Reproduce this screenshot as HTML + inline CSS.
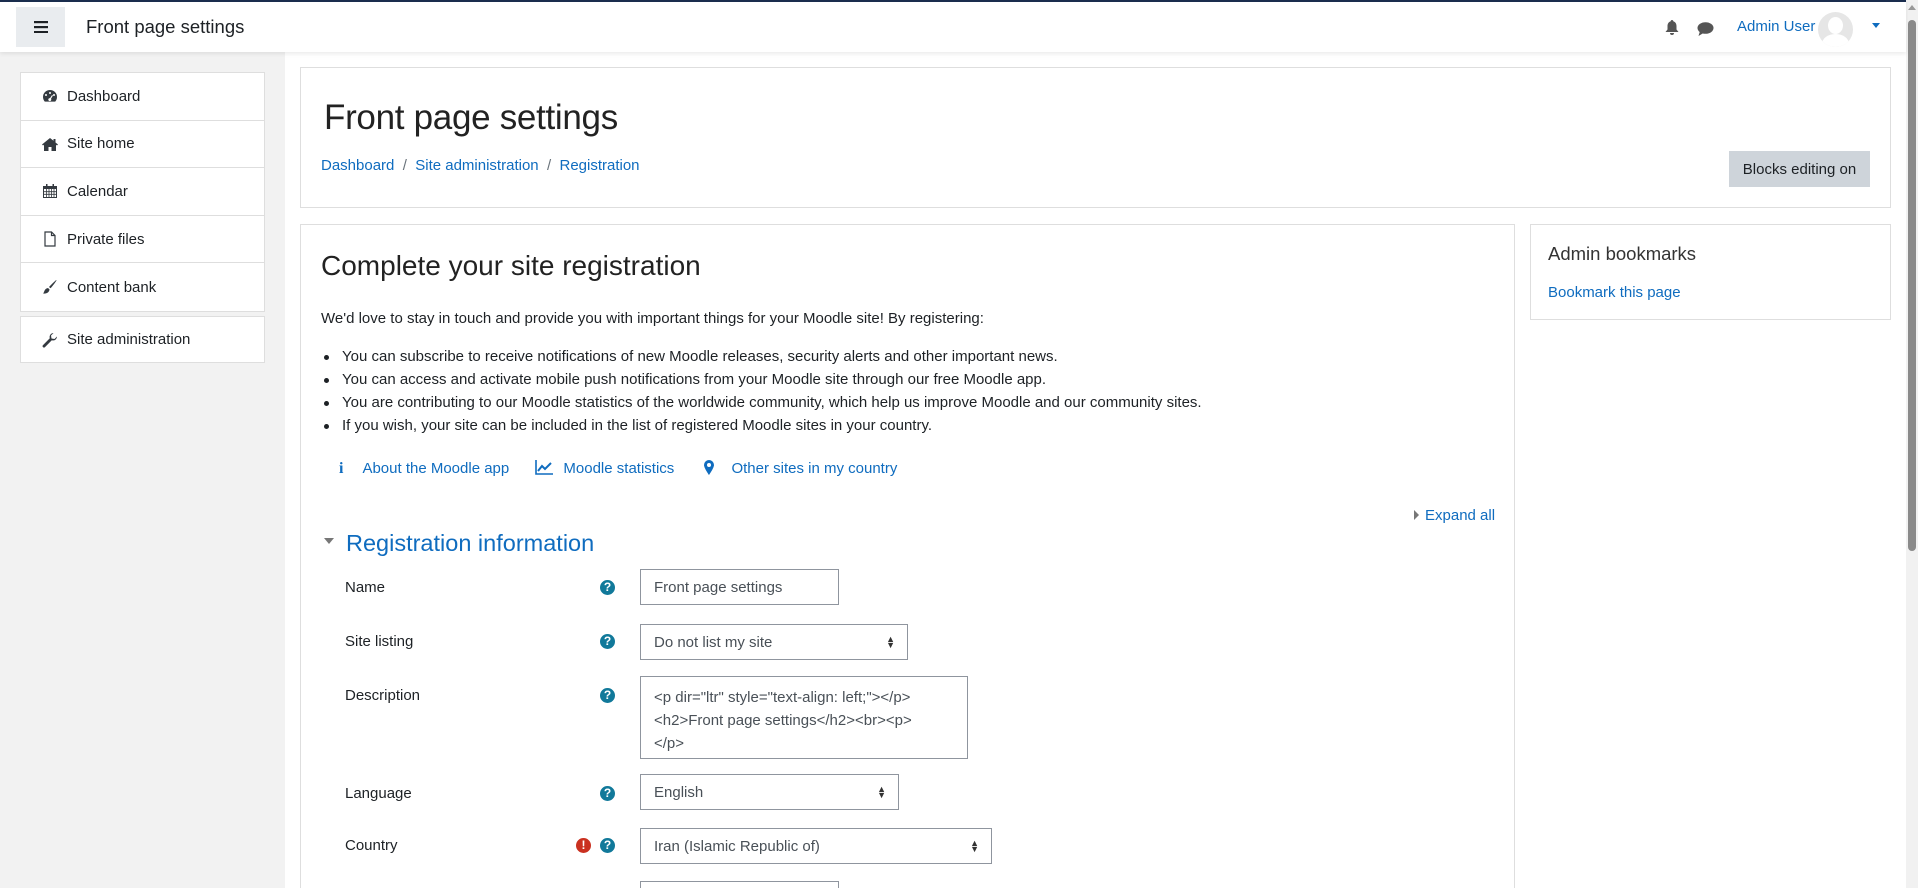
<!DOCTYPE html>
<html><head><meta charset="utf-8">
<style>
*{box-sizing:border-box;margin:0;padding:0}
html,body{width:1918px;height:888px;overflow:hidden;background:#fff;font-family:"Liberation Sans",Arial,sans-serif;font-size:15px;color:#1d2125}
#wrap{position:relative;width:1918px;height:888px;overflow:hidden}
a{color:#0f6cbf;text-decoration:none}
.abs{position:absolute}
#top{position:absolute;left:0;top:0;width:1906px;height:52px;background:#fff;border-top:2px solid #1a2d4d;box-shadow:0 2px 4px rgba(0,0,0,.08);z-index:2}
#side{position:absolute;left:0;top:52px;width:285px;height:836px;background:#f2f2f2}
.blk{position:absolute;left:20px;width:245px;background:#fff;border:1px solid #dedede}
.it{height:47.6px;border-bottom:1px solid #dedede;display:flex;align-items:center;padding-left:21px;font-size:15px;color:#1d2125}
.it:last-child{border-bottom:none}
.it svg{width:16px;height:16px;margin-right:9px;fill:#343a40}
.card{position:absolute;background:#fff;border:1px solid #dedede}
h1{font-weight:300;font-size:35px;color:#222;position:absolute;left:23px;top:30px;letter-spacing:-0.3px}
.lbl{position:absolute;left:345px;font-size:15px}
.hlp{position:absolute;left:600px;width:15px;height:15px;border-radius:50%;background:#11799a;color:#fff;font-size:12px;font-weight:bold;text-align:center;line-height:15px}
.inp{position:absolute;left:640px;border:1px solid #8f959e;background:#fff;font-size:15px;padding-left:13px;display:flex;align-items:center;color:#495057}
.arr{position:absolute;right:12px;top:50%;transform:translateY(-50%);font-size:9px;line-height:6px;color:#333}
ul{list-style:none}
li{position:relative;padding-left:21px;height:23px;line-height:23px}
li:before{content:"";position:absolute;left:3px;top:10px;width:5px;height:5px;border-radius:50%;background:#1d2125}
</style></head><body><div id="wrap">
<div id="top">
 <div class="abs" style="left:16px;top:5px;width:49px;height:40px;background:#e9ecef;display:flex;align-items:center;justify-content:center">
  <svg width="14" height="12" viewBox="0 0 14 12"><rect y="0" width="14" height="2.2" fill="#1d2125"/><rect y="5" width="14" height="2.2" fill="#1d2125"/><rect y="10" width="14" height="2" fill="#1d2125"/></svg>
 </div>
 <div class="abs" style="left:86px;top:14px;font-size:18.5px;color:#1d2125">Front page settings</div>
 <svg class="abs" style="left:1665px;top:18px" width="14" height="16" viewBox="0 0 14 16"><path d="M7 0c1 0 1.3.8 1.3 1.3C10.5 2 11.5 4 11.5 6v3.5L13.5 12H.5l2-2.5V6c0-2 1-4 3.2-4.7C5.7.8 6 0 7 0zM5 13h4a2 2 0 01-4 0z" fill="#555"/></svg>
 <svg class="abs" style="left:1697px;top:20px" width="17" height="15" viewBox="0 0 17 15"><ellipse cx="8.5" cy="6" rx="8" ry="5.8" fill="#555"/><path d="M3 9l-1.5 5 5-3z" fill="#555"/></svg>
 <div class="abs" style="left:1737px;top:16px;font-size:15px;color:#0f6cbf">Admin User</div>
 <div class="abs" style="left:1818px;top:10px;width:35px;height:35px;border-radius:50%;background:#e6e6e6;overflow:hidden">
  <div class="abs" style="left:10px;top:5px;width:15px;height:17px;border-radius:50%;background:#fff"></div>
  <div class="abs" style="left:4px;top:22px;width:27px;height:20px;border-radius:50%;background:#fff"></div>
 </div>
 <div class="abs" style="left:1872px;top:21px;width:0;height:0;border-left:4px solid transparent;border-right:4px solid transparent;border-top:5px solid #0f6cbf"></div>
</div>
<div id="side">
 <div class="blk" style="top:20px">
  <div class="it"><svg viewBox="0 0 16 16"><path d="M8 2a7 7 0 00-7 7c0 1.8.7 3.4 1.8 4.6h10.4A7 7 0 0015 9a7 7 0 00-7-7zm0 2a1 1 0 110 2 1 1 0 010-2zM4 6a1 1 0 110 2 1 1 0 010-2zm8 0a1 1 0 110 2 1 1 0 010-2zm-1 1.5l-2 3.2a1.5 1.5 0 11-1-.6l2-3z"/></svg>Dashboard</div>
  <div class="it"><svg viewBox="0 0 16 16"><path d="M8 2L0 8.5l1 1 1-.8V15h4.5v-4h3v4H14V8.7l1 .8 1-1-2.5-2V3h-2v1.8z"/></svg>Site home</div>
  <div class="it"><svg viewBox="0 0 16 16"><path d="M1 3h14v12H1zM2 6v8h12V6zM4 1h1.5v3H4zm6.5 0H12v3h-1.5z"/><path d="M4.5 6v8M7 6v8M9.5 6v8M12 6v8M2 8.7h12M2 11.3h12" stroke="#343a40" stroke-width=".8"/></svg>Calendar</div>
  <div class="it"><svg viewBox="0 0 16 16"><path d="M3 1h6.5L13 4.5V15H3z" fill="none" stroke="#343a40" stroke-width="1.2"/><path d="M9.5 1v3.5H13" fill="none" stroke="#343a40" stroke-width="1.2"/></svg>Private files</div>
  <div class="it"><svg viewBox="0 0 16 16"><path d="M14.5 1c.5.3-4.5 7-6 8.3l-1.5-1.3C8.5 6.5 14 .7 14.5 1zM6 9l1.5 1.4C7.3 13 5 15 1 14.5c1.5-1 1-4.8 5-5.5z"/></svg>Content bank</div>
 </div>
 <div class="blk" style="top:264px">
  <div class="it" style="height:45px"><svg viewBox="0 0 16 16"><path d="M15 4.5a4 4 0 01-5.2 3.8L3 15.1a1.4 1.4 0 01-2-2l6.8-6.8A4 4 0 0111.5 1L9 3.5l.5 3 3 .5L15 4.5z"/></svg>Site administration</div>
 </div>
</div>
<div class="card" style="left:300px;top:67px;width:1591px;height:141px">
 <h1>Front page settings</h1>
 <div class="abs" style="left:20px;top:89px;font-size:15px;color:#6a737b"><a href="#">Dashboard</a>&nbsp; / &nbsp;<a href="#">Site administration</a>&nbsp; / &nbsp;<a href="#">Registration</a></div>
 <div class="abs" style="left:1428px;top:83px;width:141px;height:36px;background:#ced4da;display:flex;align-items:center;justify-content:center;font-size:15px;color:#1d2125">Blocks editing on</div>
</div>
<div class="card" style="left:1530px;top:224px;width:361px;height:96px">
 <div class="abs" style="left:17px;top:18px;font-size:18.5px;font-weight:300;color:#333">Admin bookmarks</div>
 <a class="abs" style="left:17px;top:59px;font-size:15px" href="#">Bookmark this page</a>
</div>
<div class="card" style="left:300px;top:224px;width:1215px;height:700px">
 <div class="abs" style="left:20px;top:25px;font-size:28px;font-weight:300;color:#222">Complete your site registration</div>
 <div class="abs" style="left:20px;top:85px;font-size:15px">We'd love to stay in touch and provide you with important things for your Moodle site! By registering:</div>
 <ul class="abs" style="left:20px;top:120px;font-size:15px">
  <li>You can subscribe to receive notifications of new Moodle releases, security alerts and other important news.</li>
  <li>You can access and activate mobile push notifications from your Moodle site through our free Moodle app.</li>
  <li>You are contributing to our Moodle statistics of the worldwide community, which help us improve Moodle and our community sites.</li>
  <li>If you wish, your site can be included in the list of registered Moodle sites in your country.</li>
 </ul>
 <div class="abs" style="left:38px;top:235px;font-size:15px;color:#0f6cbf;white-space:nowrap">
  <span style="font-weight:bold;font-family:'Liberation Serif',serif;font-size:16px">i</span><span style="margin-left:19px">About the Moodle app</span>
  <svg style="margin-left:22px;vertical-align:-2px" width="18" height="15" viewBox="0 0 18 15"><path d="M1 0v14h17" fill="none" stroke="#0f6cbf" stroke-width="1.6"/><path d="M3 11l4-5 3 3 6-6" fill="none" stroke="#0f6cbf" stroke-width="2"/></svg><span style="margin-left:10px">Moodle statistics</span>
  <svg style="margin-left:26px;vertical-align:-2px" width="10" height="15" viewBox="0 0 10 15"><path d="M5 0a5 5 0 00-5 5c0 3 5 10 5 10s5-7 5-10a5 5 0 00-5-5zm0 3a2 2 0 110 4 2 2 0 010-4z" fill="#0f6cbf"/></svg><span style="margin-left:17px">Other sites in my country</span>
 </div>
 <div class="abs" style="left:1113px;top:282px;font-size:15px;color:#0f6cbf"><span style="display:inline-block;border-top:5px solid transparent;border-bottom:5px solid transparent;border-left:5px solid #777;margin-right:6px"></span>Expand all</div>
 <div class="abs" style="left:23px;top:313px;border-left:5px solid transparent;border-right:5px solid transparent;border-top:6px solid #777"></div>
 <div class="abs" style="left:45px;top:305px;font-size:23.5px;color:#0f6cbf">Registration information</div>
</div>
<div class="lbl" style="top:579px">Name</div>
<div class="hlp" style="top:580px">?</div>
<div class="inp" style="top:569px;width:199px;height:36px">Front page settings</div>
<div class="lbl" style="top:633px">Site listing</div>
<div class="hlp" style="top:634px">?</div>
<div class="inp" style="top:624px;width:268px;height:36px">Do not list my site<span class="arr">▲<br>▼</span></div>
<div class="lbl" style="top:687px">Description</div>
<div class="hlp" style="top:688px">?</div>
<div class="inp" style="top:676px;width:328px;height:83px;display:block;padding-top:9px;line-height:23px;font-size:15px">&lt;p dir="ltr" style="text-align: left;"&gt;&lt;/p&gt;<br>&lt;h2&gt;Front page settings&lt;/h2&gt;&lt;br&gt;&lt;p&gt;<br>&lt;/p&gt;</div>
<div class="lbl" style="top:785px">Language</div>
<div class="hlp" style="top:786px">?</div>
<div class="inp" style="top:774px;width:259px;height:36px">English<span class="arr">▲<br>▼</span></div>
<div class="lbl" style="top:837px">Country</div>
<div class="hlp" style="top:838px;left:576px;background:#ca3120">!</div>
<div class="hlp" style="top:838px">?</div>
<div class="inp" style="top:828px;width:352px;height:36px">Iran (Islamic Republic of)<span class="arr">▲<br>▼</span></div>
<div class="inp" style="top:881px;width:199px;height:36px"></div>
<div class="abs" style="left:1906px;top:0;width:12px;height:888px;background:#f1f1f1"></div>
<div class="abs" style="left:1908px;top:20px;width:8px;height:531px;background:#8a8a8a;border-radius:4px"></div>
<div class="abs" style="left:1908px;top:5px;border-left:4px solid transparent;border-right:4px solid transparent;border-bottom:5px solid #999"></div>
</div></body></html>
